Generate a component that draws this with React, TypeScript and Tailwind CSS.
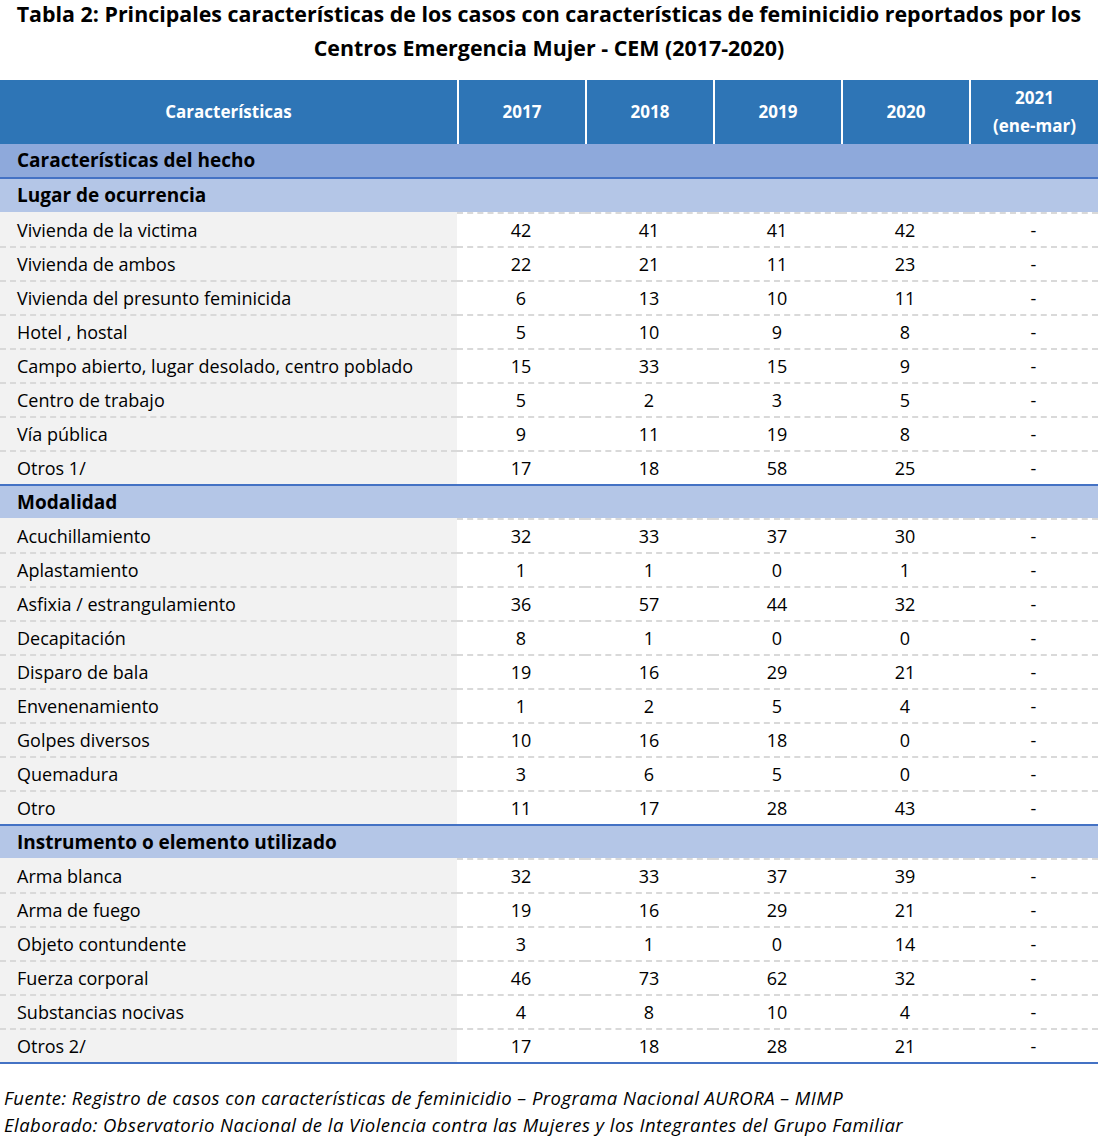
import React from 'react';

type Row = { label: string; values: (number | string)[] };
type Group = { title: string; rows: Row[] };

const groups: Group[] = [
  {
    title: 'Lugar de ocurrencia',
    rows: [
      { label: 'Vivienda de la victima', values: [42, 41, 41, 42] },
      { label: 'Vivienda de ambos', values: [22, 21, 11, 23] },
      { label: 'Vivienda del presunto feminicida', values: [6, 13, 10, 11] },
      { label: 'Hotel , hostal', values: [5, 10, 9, 8] },
      { label: 'Campo abierto, lugar desolado, centro poblado', values: [15, 33, 15, 9] },
      { label: 'Centro de trabajo', values: [5, 2, 3, 5] },
      { label: 'Vía pública', values: [9, 11, 19, 8] },
      { label: 'Otros 1/', values: [17, 18, 58, 25] },
    ],
  },
  {
    title: 'Modalidad',
    rows: [
      { label: 'Acuchillamiento', values: [32, 33, 37, 30] },
      { label: 'Aplastamiento', values: [1, 1, 0, 1] },
      { label: 'Asfixia / estrangulamiento', values: [36, 57, 44, 32] },
      { label: 'Decapitación', values: [8, 1, 0, 0] },
      { label: 'Disparo de bala', values: [19, 16, 29, 21] },
      { label: 'Envenenamiento', values: [1, 2, 5, 4] },
      { label: 'Golpes diversos', values: [10, 16, 18, 0] },
      { label: 'Quemadura', values: [3, 6, 5, 0] },
      { label: 'Otro', values: [11, 17, 28, 43] },
    ],
  },
  {
    title: 'Instrumento o elemento utilizado',
    rows: [
      { label: 'Arma blanca', values: [32, 33, 37, 39] },
      { label: 'Arma de fuego', values: [19, 16, 29, 21] },
      { label: 'Objeto contundente', values: [3, 1, 0, 14] },
      { label: 'Fuerza corporal', values: [46, 73, 62, 32] },
      { label: 'Substancias nocivas', values: [4, 8, 10, 4] },
      { label: 'Otros 2/', values: [17, 18, 28, 21] },
    ],
  },
];

const cols = 'grid grid-cols-[457px_128px_128px_128px_128px_129px]';
const dash = 'border-t-2 border-dashed border-[#d9d9d9]';

function DataRow({ row, first }: { row: Row; first: boolean }) {
  return (
    <div className={`${cols} h-[34px] text-[18px] text-black`}>
      <div className={`flex items-center bg-[#f2f2f2] pl-[17px] ${first ? 'border-t-2 border-[#f2f2f2]' : dash}`}>
        {row.label}
      </div>
      {row.values.map((v, i) => (
        <div key={i} className={`flex items-center justify-center ${dash}`}>
          {v}
        </div>
      ))}
      <div className={`flex items-center justify-center ${dash}`}>-</div>
    </div>
  );
}

export default function App() {
  return (
    <div className="w-[1098px] bg-white font-['Open_Sans',sans-serif] text-black">
      <h1 className="-mt-[3px] text-center text-[21.4px] font-bold leading-[34px]">
        Tabla 2: Principales características de los casos con características de feminicidio reportados por los
        <br />
        Centros Emergencia Mujer - CEM (2017-2020)
      </h1>

      <div className="mt-[15px]">
        {/* Header */}
        <div className={`${cols} h-[64px] bg-[#2e75b6] text-[17px] font-bold text-white`}>
          <div className="flex items-center justify-center">Características</div>
          {['2017', '2018', '2019', '2020'].map((y) => (
            <div key={y} className="flex items-center justify-center border-l-2 border-white">
              {y}
            </div>
          ))}
          <div className="flex flex-col items-center justify-center border-l-2 border-white leading-[28px]">
            <span>2021</span>
            <span>(ene-mar)</span>
          </div>
        </div>

        <div className="flex h-[35px] items-center border-b-2 border-[#4472c4] bg-[#8ea9db] pl-[17px] text-[19px] font-bold">
          Características del hecho
        </div>

        {groups.map((g, gi) => (
          <div key={g.title} className={gi > 0 ? 'border-t-2 border-[#4472c4]' : ''}>
            <div
              className={`flex items-center bg-[#b4c6e7] pl-[17px] text-[19px] font-bold ${gi > 0 ? 'h-[32px]' : 'h-[33px]'}`}
            >
              {g.title}
            </div>
            {g.rows.map((r, ri) => (
              <DataRow key={r.label} row={r} first={ri === 0} />
            ))}
          </div>
        ))}
        <div className="border-t-2 border-[#4472c4]" />
      </div>

      <div className="mt-[20px] pl-[4px] text-[18.5px] italic leading-[27px] tracking-[0.45px]">
        <p>Fuente: Registro de casos con características de feminicidio – Programa Nacional AURORA – MIMP</p>
        <p>Elaborado: Observatorio Nacional de la Violencia contra las Mujeres y los Integrantes del Grupo Familiar</p>
      </div>
    </div>
  );
}
